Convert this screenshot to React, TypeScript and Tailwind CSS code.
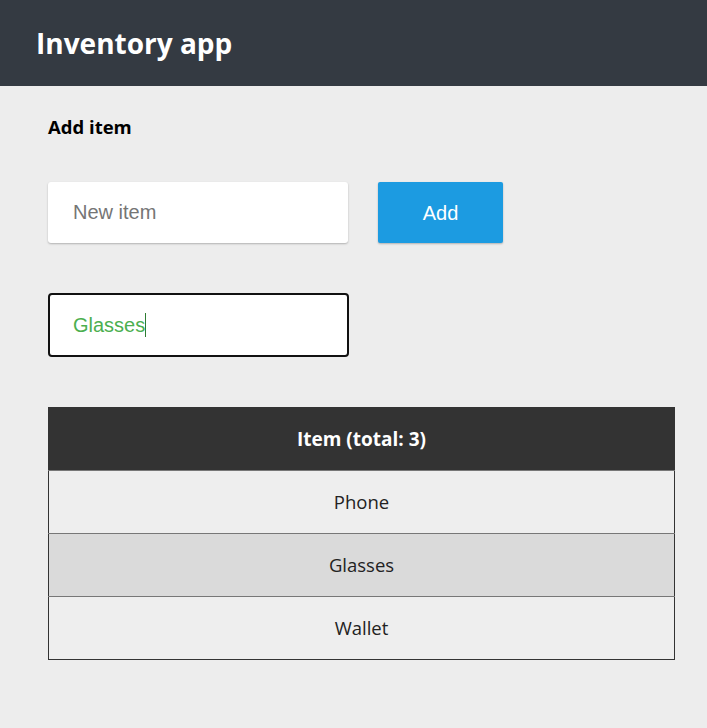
import { useState } from "react";

const App: React.FC = () => {
  const [items, setItems] = useState<string[]>(["Phone", "Glasses", "Wallet"]);
  const [newItem, setNewItem] = useState("");
  const [search, setSearch] = useState("Glasses");

  const handleAdd = () => {
    if (!newItem.trim()) return;
    setItems([...items, newItem.trim()]);
    setNewItem("");
  };

  return (
    <div className="min-h-[728px] bg-[#ededed] font-['Open_Sans','Noto_Sans',sans-serif]">
      <header className="h-[86px] bg-[#343a42] flex items-center px-[36px]">
        <h1 className="text-[28px] font-bold text-white leading-none">Inventory app</h1>
      </header>

      <main className="pl-[48px] pr-[32px] pt-[28px]">
        <h2 className="text-[18.5px] font-bold text-black leading-[26px]">Add item</h2>

        <div className="flex gap-[30px] mt-[42px]">
          <input
            type="text"
            className="w-[300px] h-[61px] bg-white rounded-[3px] shadow-[0_1px_2px_rgba(0,0,0,0.25)] px-[25px] text-[20px] font-['Liberation_Sans',Arial,sans-serif] text-[#333] placeholder:text-[#757575] outline-none"
            placeholder="New item"
            value={newItem}
            onChange={(e) => setNewItem(e.target.value)}
          />
          <button
            onClick={handleAdd}
            className="w-[125px] h-[61px] bg-[#1c9be1] rounded-[2px] shadow-[0_1px_2px_rgba(0,0,0,0.25)] text-white text-[20px] font-['Liberation_Sans',Arial,sans-serif]"
          >
            Add
          </button>
        </div>

        <div className="mt-[50px] w-[301px] h-[64px] bg-white border-2 border-[#111] rounded-[4px] px-[23px] flex items-center">
          <input
            type="text"
            size={search.length}
            className="w-auto text-[20px] font-['Liberation_Sans',Arial,sans-serif] text-[#4caf50] outline-none caret-transparent field-sizing-content"
            value={search}
            onChange={(e) => setSearch(e.target.value)}
          />
          <span className="w-px h-[24px] bg-[#2e7d32]" />
        </div>

        <table className="mt-[50px] w-[627px] border-collapse border border-[#333] text-center">
          <thead>
            <tr className="h-[63px] bg-[#333]">
              <th className="text-white text-[19px] font-bold">Item (total: {items.length})</th>
            </tr>
          </thead>
          <tbody>
            {items.map((item) => (
              <tr
                key={item}
                className={
                  "h-[63px] border-t border-[#777] " +
                  (item === search ? "bg-[#dadada]" : "bg-[#eeeeee]")
                }
              >
                <td className="text-[18.5px] text-[#222]">{item}</td>
              </tr>
            ))}
          </tbody>
        </table>
      </main>
    </div>
  );
};

export default App;
